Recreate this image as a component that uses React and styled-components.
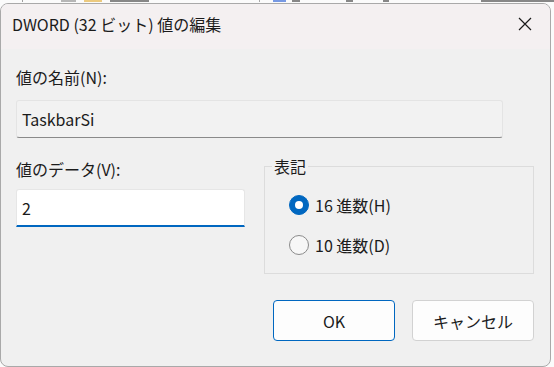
import React from 'react'
import styled, { createGlobalStyle } from 'styled-components'

const GlobalStyle = createGlobalStyle`
  html, body {
    margin: 0;
    padding: 0;
    background: #fbfbfb;
  }
  body {
    width: 554px;
    height: 367px;
    overflow: hidden;
    font-family: "Noto Sans CJK JP", "Noto Sans", sans-serif;
    color: #1b1b1b;
  }
`

// bits of the window behind the dialog, only their lower edge shows
const backBits = [
  { left: 22, width: 1, color: '#777' },
  { left: 38, width: 16, color: '#999' },
  { left: 8, width: 20, color: '#e6b54a' },
  { left: 8, width: 42, color: '#555' },
  { left: 110, width: 1, color: '#888' },
  { left: 14, width: 14, color: '#3f6fd8' },
  { left: 6, width: 8, color: '#555' },
  { left: 46, width: 8, color: '#555' },
  { left: 30, width: 6, color: '#555' },
  { left: 92, width: 80, color: '#555' },
]

function App() {
  return (
    <Desktop>
      <GlobalStyle />
      <BackStrip>
        {backBits.map((bit, i) => (
          <BackBit key={i} left={bit.left} width={bit.width} color={bit.color} />
        ))}
      </BackStrip>

      <Window>
        <TitleBar>
          <Title>DWORD (32 ビット) 値の編集</Title>
          <CloseButton>
            <svg width='14' height='14' viewBox='0 0 14 14'>
              <path d='M1 1 L13 13 M13 1 L1 13' stroke='#1b1b1b' strokeWidth='1.2' fill='none' />
            </svg>
          </CloseButton>
        </TitleBar>

        <Body>
          <Label>値の名前(N):</Label>
          <NameField>TaskbarSi</NameField>

          <DataRow>
            <DataColumn>
              <Label>値のデータ(V):</Label>
              <DataInput defaultValue='2' />
            </DataColumn>

            <Group>
              <Legend>表記</Legend>
              <RadioRow>
                <RadioMark checked />
                <RadioText>16 進数(H)</RadioText>
              </RadioRow>
              <RadioRow>
                <RadioMark />
                <RadioText>10 進数(D)</RadioText>
              </RadioRow>
            </Group>
          </DataRow>

          <ButtonRow>
            <DialogButton primary>OK</DialogButton>
            <DialogButton>キャンセル</DialogButton>
          </ButtonRow>
        </Body>
      </Window>
    </Desktop>
  )
}

export default App

const Desktop = styled.div`
  width: 554px;
  height: 367px;
  display: flex;
  flex-direction: column;
`
const BackStrip = styled.div`
  height: 3px;
  display: flex;
  align-items: flex-start;
`
const BackBit = styled.span`
  width: ${(props) => props.width}px;
  height: 2px;
  margin-left: ${(props) => props.left}px;
  background: ${(props) => props.color};
  opacity: 0.7;
`
const Window = styled.div`
  width: 549px;
  height: 362px;
  border: 1px solid #a9a9a9;
  border-radius: 8px;
  background: #f0f0f0;
  overflow: hidden;
  display: flex;
  flex-direction: column;
`
const TitleBar = styled.div`
  height: 45px;
  flex-shrink: 0;
  background: #f4f0f1;
  display: flex;
  align-items: center;
  justify-content: space-between;
  padding-left: 11px;
  padding-right: 18px;
`
const Title = styled.div`
  font-size: 16px;
  line-height: 20px;
  margin-top: -5px;
`
const CloseButton = styled.div`
  width: 14px;
  height: 14px;
  display: flex;
  margin-top: -5px;
`
const Body = styled.div`
  display: flex;
  flex-direction: column;
  padding: 18px 16px 0 15px;
`
const Label = styled.div`
  font-size: 16px;
  line-height: 20px;
`
const NameField = styled.div`
  width: 470px;
  height: 36px;
  margin-top: 13px;
  padding-left: 5px;
  padding-right: 10px;
  display: flex;
  align-items: center;
  font-size: 16px;
  background: #f2f2f2;
  border: 1px solid #e4e4e4;
  border-bottom: 1px solid #8a8a8a;
  border-radius: 3px;
`
const DataRow = styled.div`
  display: flex;
  gap: 19px;
  margin-top: 21px;
`
const DataColumn = styled.div`
  width: 229px;
  display: flex;
  flex-direction: column;
`
const DataInput = styled.input`
  margin-top: 10px;
  box-sizing: border-box;
  height: 38px;
  padding: 0 0 0 5px;
  font-family: inherit;
  font-size: 16px;
  color: #1b1b1b;
  background: #ffffff;
  border: 1px solid #e6e6e6;
  border-bottom: 2px solid #0067c0;
  border-radius: 3px 3px 0 0;
  outline: none;
`
const Group = styled.fieldset`
  width: 270px;
  box-sizing: border-box;
  margin: 0;
  padding: 0 0 8px 24px;
  border: 1px solid #dcdcdc;
  display: flex;
  flex-direction: column;
`
const Legend = styled.legend`
  font-size: 16px;
  line-height: 14px;
  padding: 0 2px;
  margin-left: -17px;
`
const RadioRow = styled.div`
  height: 40px;
  display: flex;
  align-items: center;
  gap: 6px;
  &:first-of-type {
    margin-top: 12px;
  }
`
const RadioMark = styled.span`
  width: 20px;
  height: 20px;
  box-sizing: border-box;
  border-radius: 50%;
  background: ${(props) => (props.checked ? '#0067c0' : '#f7f7f7')};
  border: 1px solid ${(props) => (props.checked ? '#0067c0' : '#8a8a8a')};
  display: flex;
  align-items: center;
  justify-content: center;
  &::after {
    content: '';
    width: 8px;
    height: 8px;
    border-radius: 50%;
    background: #ffffff;
    display: ${(props) => (props.checked ? 'block' : 'none')};
  }
`
const RadioText = styled.span`
  font-size: 16px;
  line-height: 20px;
`
const ButtonRow = styled.div`
  display: flex;
  justify-content: flex-end;
  gap: 17px;
  margin-top: 26px;
`
const DialogButton = styled.button`
  width: 122px;
  height: 41px;
  font-family: inherit;
  font-size: 16px;
  color: #1b1b1b;
  background: #fdfdfd;
  border: 1px solid ${(props) => (props.primary ? '#0067c0' : '#d2d2d2')};
  border-radius: 4px;
  padding: 0;
`
